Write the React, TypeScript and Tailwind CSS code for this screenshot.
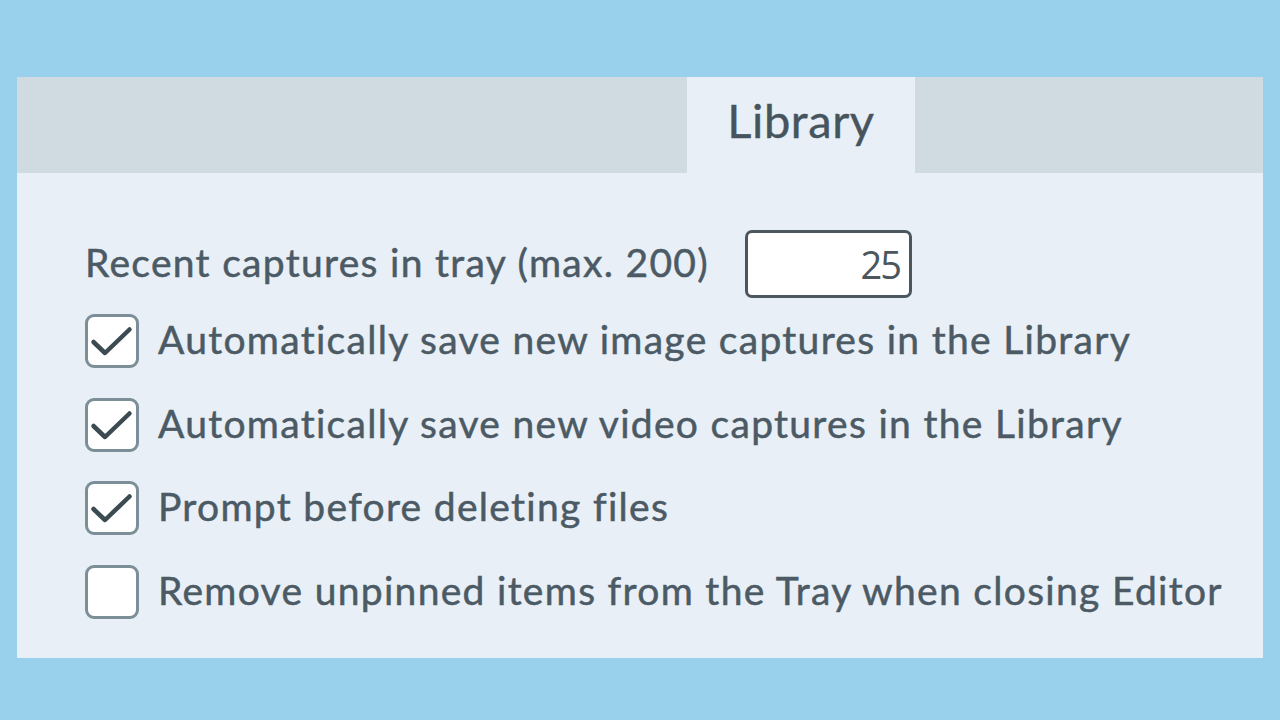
const font = { fontFamily: 'Lato, "Open Sans", sans-serif' };

const Check = () => (
  <svg width="54" height="54" viewBox="0 0 54 54" className="absolute inset-0">
    <polyline
      points="8.5,28 20,39 44.5,15.5"
      fill="none"
      stroke="#3c4a52"
      strokeWidth="4.5"
      strokeLinecap="round"
      strokeLinejoin="round"
    />
  </svg>
);

const options = [
  { label: 'Automatically save new image captures in the Library', checked: true },
  { label: 'Automatically save new video captures in the Library', checked: true },
  { label: 'Prompt before deleting files', checked: true },
  { label: 'Remove unpinned items from the Tray when closing Editor', checked: false },
];

export default function App() {
  return (
    <div className="w-[1280px] h-[720px] bg-[#99d1ec] pt-[77px] px-[17px]" style={font}>
      <div className="w-[1246px] h-[581px] bg-[#e8eff6]">
        {/* tab strip */}
        <div className="flex h-[96px] bg-[#d0dbe1]">
          <div className="w-[670px]" />
          <div className="w-[228px] bg-[#e8eff6] flex items-center justify-center">
            <span className="text-[47px] text-[#46545d] leading-none pb-[9px] tracking-[0.6px] [-webkit-text-stroke:0.4px_#46545d]">
              Library
            </span>
          </div>
        </div>

        {/* settings */}
        <div className="pl-[68px] pt-[57px]">
          <div className="flex items-center h-[68px]">
            <span className="text-[39px] text-[#4b5a64] leading-none tracking-[1.3px] w-[660px] pb-[3px] [-webkit-text-stroke:0.5px_#4b5a64]">
              Recent captures in tray (max. 200)
            </span>
            <div className="w-[167px] h-[68px] bg-white border-[3px] border-[#4b565d] rounded-[7px] flex items-center justify-end pr-[9px]">
              <span
                className="text-[38px] text-[#4b565d] leading-none tracking-[-2px]"
                style={{ fontFamily: '"Open Sans", sans-serif' }}
              >
                25
              </span>
            </div>
          </div>

          <div className="flex flex-col gap-[29.6px] mt-[16px]">
            {options.map((o) => (
              <div key={o.label} className="flex items-center h-[54px]">
                <div className="relative w-[54px] h-[54px] shrink-0 bg-white border-[3px] border-[#7c8e98] rounded-[9px]">
                  {o.checked && (
                    <div className="absolute -inset-[3px]">
                      <Check />
                    </div>
                  )}
                </div>
                <span className="ml-[19px] pb-[3px] text-[39px] text-[#4b5a64] leading-none tracking-[1.3px] [-webkit-text-stroke:0.5px_#4b5a64]">
                  {o.label}
                </span>
              </div>
            ))}
          </div>
        </div>
      </div>
    </div>
  );
}
